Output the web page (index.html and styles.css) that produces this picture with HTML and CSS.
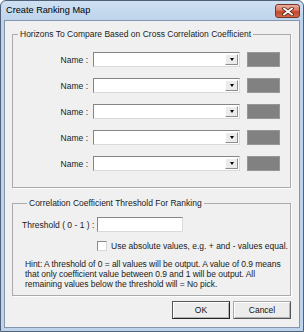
FILE: index.html
```html
<!DOCTYPE html>
<html>
<head>
<meta charset="utf-8">
<title>Create Ranking Map</title>
<link rel="stylesheet" href="styles.css">
</head>
<body>
<div class="window">
  <div class="titlebar">
    <span class="title">Create Ranking Map</span>
    <div class="close">
      <svg width="12" height="9" viewBox="0 0 12 9">
        <path d="M2 1.5 L10 7.5 M10 1.5 L2 7.5" stroke="#5a2418" stroke-width="3.4" stroke-linecap="square" fill="none"/>
        <path d="M2 1.5 L10 7.5 M10 1.5 L2 7.5" stroke="#ffffff" stroke-width="1.7" stroke-linecap="square" fill="none"/>
      </svg>
    </div>
  </div>
  <div class="client">
    <fieldset class="group group-horizons">
      <legend>Horizons To Compare Based on Cross Correlation Coefficient</legend>
      <div class="rows">
        <div class="row"><span class="name-label">Name :</span><div class="combo"><div class="combo-btn"><span class="arrow"></span></div></div><div class="swatch"></div></div>
        <div class="row"><span class="name-label">Name :</span><div class="combo"><div class="combo-btn"><span class="arrow"></span></div></div><div class="swatch"></div></div>
        <div class="row"><span class="name-label">Name :</span><div class="combo"><div class="combo-btn"><span class="arrow"></span></div></div><div class="swatch"></div></div>
        <div class="row"><span class="name-label">Name :</span><div class="combo"><div class="combo-btn"><span class="arrow"></span></div></div><div class="swatch"></div></div>
        <div class="row"><span class="name-label">Name :</span><div class="combo"><div class="combo-btn"><span class="arrow"></span></div></div><div class="swatch"></div></div>
      </div>
    </fieldset>
    <fieldset class="group group-threshold">
      <legend>Correlation Coefficient Threshold For Ranking</legend>
      <div class="thr-row"><span class="thr-label">Threshold ( 0 - 1 ) :</span><div class="textbox"></div></div>
      <div class="check-row"><span class="checkbox"></span><span class="check-text">Use absolute values, e.g. + and - values equal.</span></div>
      <p class="hint">Hint: A threshold of 0 = all values will be output. A value of 0.9 means<br>that only coefficient value between 0.9 and 1 will be output. All<br>remaining values below the threshold will = No pick.</p>
    </fieldset>
    <div class="buttons">
      <button class="btn btn-default">OK</button>
      <button class="btn">Cancel</button>
    </div>
  </div>
</div>
</body>
</html>
```
FILE: styles.css
```css
* { box-sizing: border-box; }
html, body { margin: 0; padding: 0; }
body {
  width: 304px;
  height: 332px;
  overflow: hidden;
  font-family: "Liberation Sans", Arial, sans-serif;
  font-size: 8.5px;
  line-height: 10px;
  color: #1a1a1a;
  background: #ffffff;
}
.window {
  width: 304px;
  height: 332px;
  border: 1px solid #4e6177;
  border-radius: 6px 6px 0 0;
  background: linear-gradient(#cfe0f3, #bcd3eb 20px, #bdd3eb);
  padding: 0 3px 3px 3px;
  display: flex;
  flex-direction: column;
}
.titlebar {
  height: 19px;
  display: flex;
  justify-content: space-between;
  align-items: flex-start;
  padding: 0 0 0 2px;
}
.title {
  font-size: 9.2px;
  line-height: 19px;
  color: #000;
}
.close {
  margin-top: 3px;
  width: 25px;
  height: 14px;
  border: 1px solid #7a3426;
  border-radius: 3px;
  background: linear-gradient(#eab0a1, #d9785f 45%, #c7462c 55%, #d0684c);
  display: flex;
  align-items: center;
  justify-content: center;
}
.client {
  flex: 1;
  background: #f0f0f0;
  border: 1px solid #8496ab;
  display: flex;
  flex-direction: column;
}
.group {
  margin: 0 8px 0 7px;
  padding: 0;
  border: 1px solid #ababab;
  box-shadow: 1px 1px 0 #ffffff;
  min-width: 0;
}
.group legend {
  margin-left: 5px;
  padding: 0 2px;
  line-height: 10px;
  font-size: 8.5px;
}
.group-horizons { margin-top: 8px; }
.rows {
  display: flex;
  flex-direction: column;
  gap: 11px;
  padding: 13px 0 16px 0;
}
.row {
  display: flex;
  align-items: center;
  height: 15px;
}
.name-label {
  width: 75px;
  text-align: right;
  margin-right: 5px;
}
.combo {
  width: 147px;
  height: 15px;
  background: #fff;
  border: 1px solid;
  border-color: #858585 #dadada #dadada #858585;
  display: flex;
  justify-content: flex-end;
  padding: 1px;
}
.combo-btn {
  width: 13px;
  height: 100%;
  background: #ebebeb;
  border: 1px solid;
  border-color: #ffffff #8e8e8e #8e8e8e #ffffff;
  display: flex;
  align-items: center;
  justify-content: center;
}
.arrow {
  width: 0;
  height: 0;
  border-left: 2.5px solid transparent;
  border-right: 2.5px solid transparent;
  border-top: 3px solid #000;
}
.swatch {
  margin-left: 7px;
  width: 33px;
  height: 15px;
  background: #818181;
  border: 1px solid #979797;
}
.group-threshold {
  margin-top: 10px;
  padding: 9px 0 6px 9px;
}
.thr-row {
  display: flex;
  align-items: center;
  height: 15px;
}
.thr-label { width: 75px; }
.textbox {
  width: 86px;
  height: 15px;
  background: #fff;
  border: 1px solid;
  border-color: #858585 #dadada #dadada #858585;
}
.check-row {
  display: flex;
  align-items: center;
  margin-top: 8px;
  margin-left: 75px;
  height: 11px;
}
.checkbox {
  width: 10px;
  height: 10px;
  background: #fff;
  border: 1px solid;
  border-color: #8a8a8a #d8d8d8 #d8d8d8 #8a8a8a;
  margin-right: 4px;
}
.hint {
  margin: 8px 0 0 3px;
  white-space: nowrap;
  line-height: 10px;
  letter-spacing: -0.05px;
}
.buttons {
  display: flex;
  justify-content: flex-end;
  gap: 3px;
  margin: 5px 8px 0 0;
}
.btn {
  width: 58px;
  height: 18px;
  padding: 0;
  font-family: "Liberation Sans", Arial, sans-serif;
  font-size: 8.5px;
  color: #111;
  background: #ececec;
  border: 1px solid;
  border-color: #a8a8a8 #555555 #555555 #a8a8a8;
  box-shadow: inset 1px 1px 0 #ffffff, inset -1px -1px 0 #b4b4b4;
}
.btn-default {
  border-color: #555555 #222222 #222222 #555555;
}
```
